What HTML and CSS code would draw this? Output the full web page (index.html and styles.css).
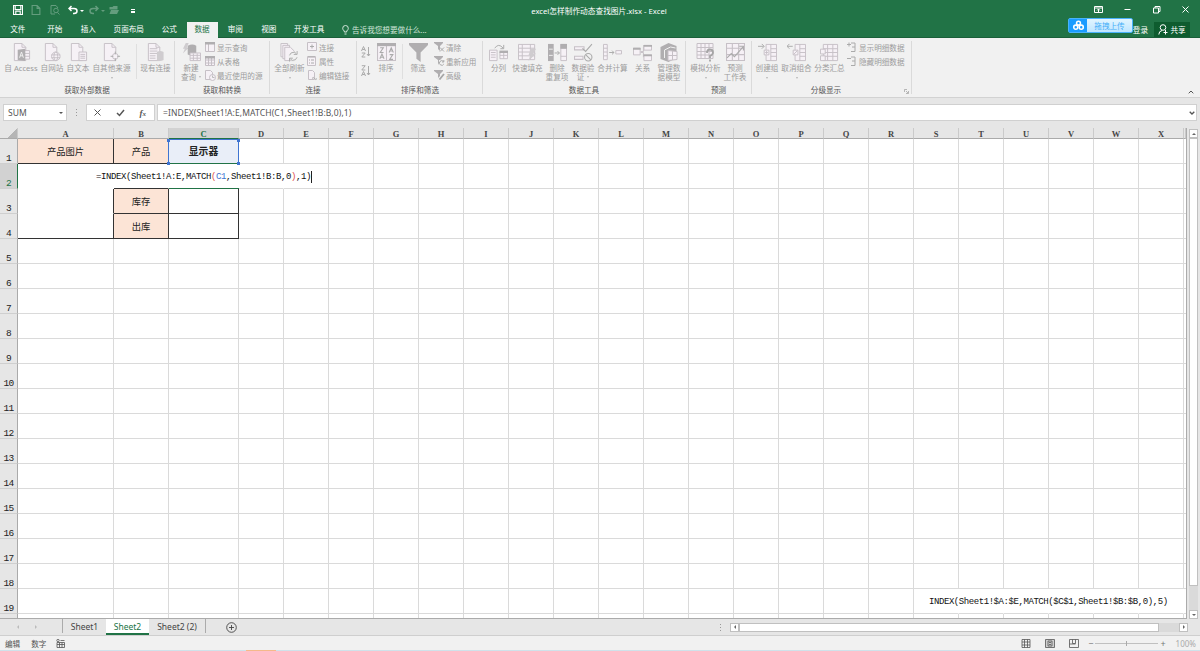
FILE: index.html
```html
<!DOCTYPE html>
<html lang="zh-CN">
<head>
  <meta charset="UTF-8" />
  <meta name="viewport" content="width=device-width, initial-scale=1" />
  <title>excel怎样制作动态查找图片.xlsx - Excel</title>
  <link rel="stylesheet" href="styles.css">
</head>
<body>

  <svg class="defs" width="0" height="0">
    <symbol id="i-access" viewBox="0 0 18 20"><path class="p" d="M1.500 .5h8l4 4v14h-12z"/><path d="M9.500 .5v4h4"/><path class="p" d="M12 8h5.500v9H12M12 11h5.500M12 14h5.500"/><path class="f" d="M5 7l8-1v13l-8-1z"/><path class="w" d="M7 15.500l2-6 2 6M7.700 13.500h2.600"/></symbol>
    <symbol id="i-web" viewBox="0 0 18 20"><path class="p" d="M1.500 .5h8l4 4v14h-12z"/><path d="M9.500 .5v4h4"/><circle class="p" cx="12.500" cy="14" r="4.500"/><ellipse cx="12.500" cy="14" rx="2" ry="4.500"/><path d="M8 12.500h9M8 15.500h9"/></symbol>
    <symbol id="i-text" viewBox="0 0 18 20"><path class="p" d="M1.500 .5h8l4 4v14h-12z"/><path d="M9.500 .5v4h4"/><path class="p" d="M9.500 9.500h8v9h-8zM11 12h5M11 14h5M11 16h5"/></symbol>
    <symbol id="i-other" viewBox="0 0 18 20"><path class="p" d="M1.500 .5h8l4 4v14h-12z"/><path d="M9.500 .5v4h4"/><circle class="p" cx="13" cy="14" r="3"/><path class="d" d="M13 9v3M13 16v3M8 14h3M15 14h3"/></symbol>
    <symbol id="i-exist" viewBox="0 0 18 20"><path class="p" d="M1.500 .5h8l4 4v14h-12z"/><path d="M9.500 .5v4h4M3 6h8M3 8.500h8M3 11h8M3 13.500h6M3 16h6"/><path class="l" d="M10.500 9.500q3.500-2 7 0v8.500q-3.500 2-7 0z"/></symbol>
    <symbol id="i-query" viewBox="0 0 20 20"><path class="l" d="M4 0h3l-2 5h2l-6 6 2-5H1z"/><path class="f" d="M6 3q5-3 9 0v9q-5 2-9 0z"/><path class="p" d="M8.500 10.500h11v8h-11zM8.500 13h11M8.500 16h11M12 11v7.500M16 11v7.500"/></symbol>
    <symbol id="i-refresh" viewBox="0 0 19 20"><path class="p" d="M.5 .5h7v14h-7z"/><path class="p" d="M2.500 2.500h7v14h-7z"/><path class="p" d="M4.500 4.500h6l4 4v10h-10z"/><circle class="bg" cx="13.500" cy="14" r="5"/><path class="d" d="M9.500 13q1-3.500 5-3.300l2 1.300M17.500 8.500v3.500h-3.500M17.500 15q-1 3.500-5 3.300l-2-1.300M9.500 19.500V16H13"/></symbol>
    <symbol id="i-sort" viewBox="0 0 18 18"><path class="p" d="M.5 .5h17v16H.5zM9 2v14.500"/><path class="f" d="M0 0h18v3H0z"/><path class="d" d="M3 4.500h3L3 9h3.200M2.700 15l2-4.500 2 4.500M3.500 13.500h2.500M11.500 9l2-4.500 2 4.500M12.300 7.500h2.500M12 11h3l-3 4.500h3.200"/></symbol>
    <symbol id="i-filter" viewBox="0 0 18 18"><path class="f" d="M0 0h18v2l-7 7v9l-4-3V9L0 2z"/></symbol>
    <symbol id="i-split" viewBox="0 0 20 18"><path class="p" d="M.5 6.500h8v11h-8zM2 9h5M2 11.500h5M2 14h5"/><path class="p" d="M11.500 8.500h8v7h-8zM15.500 8.500v7M11.500 12h8"/><path class="f" d="M11 7h9v2.500h-9z"/><path class="d" d="M6 4.500q4-6 9 0M15.500 1v4H12"/></symbol>
    <symbol id="i-flash" viewBox="0 0 20 18"><path class="p" d="M.5 .5h17v16H.5zM.5 4.500h17M.5 8.500h17M.5 12.500h17M4.500 .5v16M13 .5v16"/><path class="l" d="M14 5h5l-3 5h3l-8 8 2-6h-2z"/></symbol>
    <symbol id="i-dup" viewBox="0 0 20 18"><path class="f" d="M0 0h6v18H0z"/><path class="w" d="M1 5.500h4M1 12h4"/><path class="p" d="M13.500 .5h6v17h-6zM13.500 4.500h6M13.500 13h6"/><path class="f" d="M13 0h7v5h-7z"/><path class="d" d="M7 9.500h5M10 7.500l2 2-2 2"/></symbol>
    <symbol id="i-valid" viewBox="0 0 18 18"><path class="p" d="M.5 3.500h9v3h-9zM.5 12.500h8v3h-8z"/><path class="d" d="M8 5l3 3 6-7"/><circle class="d" cx="13.500" cy="13.500" r="3.500"/><path class="d" d="M11 11l5 5"/></symbol>
    <symbol id="i-merge" viewBox="0 0 20 18"><path class="p" d="M.5 .5h4v16h-4zM.5 4.500h4M.5 8.500h4M.5 12.500h4M13.500 7h6v3.500h-6z"/><path class="d" d="M6.500 9h5M9.500 7l2 2-2 2"/></symbol>
    <symbol id="i-rel" viewBox="0 0 20 18"><path d="M8 8h3V3M8 9h3v5"/><path class="p" d="M.5 4.500h7v7h-7zM11.500 1.500h8v5h-8zM11.500 11.500h8v6h-8z"/><path class="f" d="M0 4h8v2H0zM11 1h9v2h-9zM11 11h9v2h-9z"/></symbol>
    <symbol id="i-model" viewBox="0 0 18 19"><path class="f" d="M0 4l8-4 8 3v12l-8 4-8-3z"/><path class="w" d="M4 15V7l6-3 5 1"/><path class="p" d="M7.500 7.500l9 1v8l-9 1zM12 8v9M7.500 12.500h9"/></symbol>
    <symbol id="i-whatif" viewBox="0 0 18 19"><path class="p" d="M.5 .5h16v15H.5zM.5 4.500h16M.5 8.500h16M.5 12h16M4.500 .5v15M8.500 .5v15M12.500 .5v15"/><path class="q" d="M10.500 10q0-3.500 3-3.500t3 3q0 2-3 3.500v2M13.500 16.500v2"/></symbol>
    <symbol id="i-forecast" viewBox="0 0 18 18"><path class="p" d="M.5 .5h17v16H.5zM.5 5h17M.5 11h17M6 .5v16M12 .5v16"/><path class="d" d="M1 14l4-4 3 3 8-9M12.500 3h4v4"/></symbol>
    <symbol id="i-group" viewBox="0 0 20 18"><path class="p" d="M8.500 .5h11v17h-11zM13.500 .5v17M13.500 5h6M13.500 9h6M13.500 13h6"/><path class="p" d="M6.500 6.500h5v5h-5zM9 7.500v3M7.500 9h3"/><path class="d" d="M0 2.500h6M4 0l2.500 2.500L4 5"/></symbol>
    <symbol id="i-ungroup" viewBox="0 0 20 18"><path class="p" d="M8.500 .5h11v17h-11zM13.500 .5v17M13.500 5h6M13.500 9h6M13.500 13h6"/><path class="p" d="M6.500 6.500h5v5h-5zM7 11l4-4"/><path class="d" d="M0 2.500h6M2.500 0L0 2.500 2.500 5"/></symbol>
    <symbol id="i-subtotal" viewBox="0 0 20 18"><path class="p" d="M3.500 .5h15v17h-15zM8 .5v17M13.500 .5v17M3.500 5h15M3.500 9h15M3.500 13h15"/><path class="p" d="M.5 5.500h5v5h-5zM.5 12.500h5v5h-5z"/></symbol>
    <symbol id="i-s-show" viewBox="0 0 11 11"><path class="p" d="M.5 .5h9v9h-9zM3.500 2v8"/><path class="f" d="M0 0h10v2.500H0z"/></symbol>
    <symbol id="i-s-table" viewBox="0 0 11 11"><path class="p" d="M.5 .5h9v9h-9zM3.500 1v9M6.500 1v9M.5 4h9M.5 7h9"/><path class="f" d="M0 0h10v2.500H0z"/></symbol>
    <symbol id="i-s-recent" viewBox="0 0 11 11"><path class="p" d="M.5 .5h5l2 2v7h-7z"/><circle class="p" cx="7.500" cy="7.500" r="3"/><path d="M7.500 5.500v2h2"/></symbol>
    <symbol id="i-s-conn" viewBox="0 0 11 11"><path class="p" d="M.5 .5h9v8h-9z"/><path class="d" d="M5 2.500v4M3 4.500h4"/></symbol>
    <symbol id="i-s-prop" viewBox="0 0 11 11"><path class="p" d="M.5 .5h8v9h-8z"/><path class="d" d="M2 4h1M4 4h3M2 7h1M4 7h3M1 1h7"/></symbol>
    <symbol id="i-s-link" viewBox="0 0 11 11"><path class="p" d="M1.500 .5h4l2 2v7h-6z"/><path class="d" d="M5 8.500q1-2 2.500 0t2.500 0"/></symbol>
    <symbol id="i-s-clear" viewBox="0 0 11 11"><path class="f" d="M0 0h9v1L6 4v5L4 7V4L0 1z"/><path class="d" d="M6 5.500l4 4M10 5.500l-4 4"/></symbol>
    <symbol id="i-s-reapply" viewBox="0 0 11 11"><path class="f" d="M0 0h9v1L6 4H5v5L4 7V4L0 1z"/><path class="d" d="M9.500 5.500A2.300 2.300 0 1 0 9.800 8M9.800 4v2H8"/></symbol>
    <symbol id="i-s-adv" viewBox="0 0 11 11"><path class="f" d="M0 0h9v1L6 4v2L4 8V4L0 1z"/><path class="q" d="M10 4L5.500 9.500"/></symbol>
    <symbol id="i-s-plus" viewBox="0 0 11 11"><path class="d" d="M0 2.500h4M2 .5v4M4 1h4v8.500H4M5 5h3"/></symbol>
    <symbol id="i-s-minus" viewBox="0 0 11 11"><path class="d" d="M0 2.500h4M4 1h4v8.500H4M5 5h3"/></symbol>
    <symbol id="i-az" viewBox="0 0 10 12"><path class="d" d="M.5 5l2-4.500 2 4.500M1.300 3.500h2.500M.8 7h3.400L.8 11h3.500M7.500 1v9M6 8l1.500 2L9 8"/></symbol>
    <symbol id="i-za" viewBox="0 0 10 12"><path class="d" d="M.8 .7h3.400L.8 5h3.500M.5 11l2-4.500 2 4.500M1.300 9.500h2.500M7.500 1v9M6 8l1.500 2L9 8"/></symbol>
  </svg>

  <header class="titlebar">
    <div class="quick">
      <svg class="q-save" viewBox="0 0 9 9"><path d="M.5 .5h8v8h-8zM2 .5v3.500h5V.5M2.500 8.500v-3h4v3"/></svg>
      <svg class="q-new dim" viewBox="0 0 9 9"><path d="M1 .5h4.500L8 3v5.500H1zM5.500 .5V3H8"/></svg>
      <svg class="q-prev dim" viewBox="0 0 10 10"><path d="M5 9H1V.5h5L8 3"/><circle cx="6" cy="5.500" r="2.300"/><path d="M7.500 7.500L9.500 9.500"/></svg>
      <svg class="q-undo" viewBox="0 0 10 9"><path class="thick" d="M1 3h5q3 0 3 2.500T6 8H5M3.500 .5L1 3l2.500 2.500"/></svg>
      <span class="tri"></span>
      <svg class="q-redo dim" viewBox="0 0 10 9"><path class="thick" d="M9 3H4q-3 0-3 2.500T4 8h1M6.500 .5L9 3 6.500 5.500"/></svg>
      <span class="tri dim"></span>
      <svg class="q-open dim" viewBox="0 0 10 9"><path class="solid" d="M.5 4V1.500h3l1-1h4V4zM.5 8.500l1.500-4h8l-2 4z"/></svg>
      <span class="more"></span>
    </div>
    <div class="doc-title">excel怎样制作动态查找图片.xlsx - Excel</div>
    <div class="win">
      <svg viewBox="0 0 9 9"><path d="M.5 1.500h8v6h-8zM.5 3h8M4.500 7V4M3 5.500l1.500-1.500L6 5.500"/></svg>
      <svg viewBox="0 0 9 9"><path d="M1.500 4.500h6"/></svg>
      <svg viewBox="0 0 9 9"><path d="M1.500 3h5v5h-5zM3 3V1.500h5v5H6.500"/></svg>
      <svg viewBox="0 0 9 9"><path d="M1.500 1.500l6 6M7.500 1.500l-6 6"/></svg>
    </div>
  </header>

  <nav class="tabs">
    <span class="tab">文件</span>
    <span class="tab">开始</span>
    <span class="tab">插入</span>
    <span class="tab wide">页面布局</span>
    <span class="tab">公式</span>
    <span class="tab active">数据</span>
    <span class="tab">审阅</span>
    <span class="tab">视图</span>
    <span class="tab wide">开发工具</span>
    <span class="tell"><svg viewBox="0 0 7 10"><path d="M2.300 7V6Q.7 4.800 .7 3.300a2.800 2.800 0 0 1 5.600 0Q6.300 4.800 4.700 6v1zM2.500 9h2"/></svg>告诉我您想要做什么...</span>
    <span class="login">登录</span>
    <span class="share"><svg viewBox="0 0 10 11"><circle cx="5" cy="3.500" r="2.800"/><path d="M.8 10.500Q1 7 4 6.500M7 6l1 1M5.500 8.500h4M7.500 6.500v4"/></svg>共享</span>
  </nav>
  <div class="upload">
    <span class="upload-logo"><svg viewBox="0 0 14 12"><circle cx="7" cy="3.500" r="2.100"/><circle cx="4" cy="7.800" r="2.200"/><circle cx="10" cy="7.800" r="2.200"/></svg></span>
    <span class="upload-text">拖拽上传</span>
  </div>

  <section class="ribbon">
    <div class="group g-ext">
      <div class="tools">
        <div class="btn b-access"><svg><use href="#i-access"/></svg>自 Access</div>
        <div class="btn b3"><svg><use href="#i-web"/></svg>自网站</div>
        <div class="btn b3"><svg><use href="#i-text"/></svg>自文本</div>
        <div class="btn b5"><svg><use href="#i-other"/></svg>自其他来源<i class="caret"></i></div>
        <div class="vsep"></div>
        <div class="btn b4"><svg><use href="#i-exist"/></svg>现有连接</div>
      </div>
      <div class="caption">获取外部数据</div>
    </div>
    <div class="group g-trans">
      <div class="tools">
        <div class="btn b3"><svg><use href="#i-query"/></svg><span>新建</span><span>查询<i class="caret in"></i></span></div>
        <div class="stack">
          <div><svg><use href="#i-s-show"/></svg>显示查询</div>
          <div><svg><use href="#i-s-table"/></svg>从表格</div>
          <div><svg><use href="#i-s-recent"/></svg>最近使用的源</div>
        </div>
      </div>
      <div class="caption">获取和转换</div>
    </div>
    <div class="group g-conn">
      <div class="tools">
        <div class="btn b4"><svg><use href="#i-refresh"/></svg>全部刷新<i class="caret"></i></div>
        <div class="stack">
          <div><svg><use href="#i-s-conn"/></svg>连接</div>
          <div><svg><use href="#i-s-prop"/></svg>属性</div>
          <div><svg><use href="#i-s-link"/></svg>编辑链接</div>
        </div>
      </div>
      <div class="caption">连接</div>
    </div>
    <div class="group g-sort">
      <div class="tools">
        <div class="az"><svg><use href="#i-az"/></svg><svg><use href="#i-za"/></svg></div>
        <div class="btn b2"><svg><use href="#i-sort"/></svg>排序</div>
        <div class="vsep"></div>
        <div class="btn b2"><svg><use href="#i-filter"/></svg>筛选</div>
        <div class="stack">
          <div><svg><use href="#i-s-clear"/></svg>清除</div>
          <div><svg><use href="#i-s-reapply"/></svg>重新应用</div>
          <div><svg><use href="#i-s-adv"/></svg>高级</div>
        </div>
      </div>
      <div class="caption">排序和筛选</div>
    </div>
    <div class="group g-tools">
      <div class="tools">
        <div class="btn b2"><svg><use href="#i-split"/></svg>分列</div>
        <div class="btn b4"><svg><use href="#i-flash"/></svg>快速填充</div>
        <div class="btn b3"><svg><use href="#i-dup"/></svg><span>删除</span><span>重复项</span></div>
        <div class="btn b3"><svg><use href="#i-valid"/></svg><span>数据验</span><span>证<i class="caret in"></i></span></div>
        <div class="btn b4"><svg><use href="#i-merge"/></svg>合并计算</div>
        <div class="btn b2"><svg><use href="#i-rel"/></svg>关系</div>
        <div class="btn b3"><svg><use href="#i-model"/></svg><span>管理数</span><span>据模型</span></div>
      </div>
      <div class="caption">数据工具</div>
    </div>
    <div class="group g-fore">
      <div class="tools">
        <div class="btn b4"><svg><use href="#i-whatif"/></svg>模拟分析<i class="caret"></i></div>
        <div class="btn b3"><svg><use href="#i-forecast"/></svg><span>预测</span><span>工作表</span></div>
      </div>
      <div class="caption">预测</div>
    </div>
    <div class="group g-outline">
      <div class="tools">
        <div class="btn b3"><svg><use href="#i-group"/></svg>创建组<i class="caret"></i></div>
        <div class="btn b4"><svg><use href="#i-ungroup"/></svg>取消组合<i class="caret"></i></div>
        <div class="btn b4"><svg><use href="#i-subtotal"/></svg>分类汇总</div>
        <div class="stack">
          <div><svg><use href="#i-s-plus"/></svg>显示明细数据</div>
          <div><svg><use href="#i-s-minus"/></svg>隐藏明细数据</div>
        </div>
      </div>
      <div class="caption">分级显示</div>
      <svg class="launcher" viewBox="0 0 5 5"><path d="M.5 3V.5H3M2 2l2 2M4.500 2v2.500H2"/></svg>
    </div>
    <svg class="collapse" viewBox="0 0 6 4"><path d="M.7 3.300L3 1l2.300 2.300"/></svg>
  </section>

  <section class="formula-bar">
    <div class="name-box">SUM<span class="tri"></span></div>
    <div class="grip"></div>
    <div class="fx">
      <svg viewBox="0 0 9 9"><path d="M1.500 1.500l6 6M7.500 1.500l-6 6"/></svg>
      <svg viewBox="0 0 9 9"><path class="thick" d="M1 5l2.500 2.500L8 2"/></svg>
      <em>f<small>x</small></em>
    </div>
    <div class="formula">=INDEX(Sheet1!A:E,MATCH(C1,Sheet1!B:B,0),1)<svg viewBox="0 0 6 4"><path d="M.7 .7L3 3 5.300 .7"/></svg></div>
  </section>

  <main class="sheet">
    <div class="grid">
      <table>
        <colgroup id="cols"></colgroup>
        <thead><tr id="head"></tr></thead>
        <tbody id="rows"></tbody>
      </table>
      <div class="ref-box"><b></b><b></b><b></b><b></b></div>
      <div class="active-edge top"></div>
      <div class="active-edge bottom"></div>
      <div class="editor">=INDEX(Sheet1!A:E,MATCH<span class="red">(</span><span class="blue">C1</span>,Sheet1!B:B,0<span class="red">)</span>,1)</div>
      <div class="overflow-text">INDEX(Sheet1!$A:$E,MATCH($C$1,Sheet1!$B:$B,0),5)</div>
    </div>
    <div class="vscroll">
      <span class="arrow up"></span>
      <span class="thumb"></span>
      <span class="track"></span>
      <span class="arrow down"></span>
    </div>
  </main>

  <footer class="sheet-tabs">
    <span class="nav left"></span><span class="nav right"></span>
    <span class="stab first">Sheet1</span>
    <span class="stab current">Sheet2</span>
    <span class="stab last">Sheet2 (2)</span>
    <svg class="add" viewBox="0 0 11 11"><circle cx="5.500" cy="5.500" r="4.800"/><path d="M5.500 3v5M3 5.500h5"/></svg>
    <div class="grip"></div>
    <div class="hscroll">
      <span class="arrow prev"></span>
      <span class="thumb"></span>
      <span class="arrow next"></span>
    </div>
  </footer>

  <footer class="status">
    <span>编辑</span>
    <span>数字</span>
    <svg class="macro" viewBox="0 0 9 9"><path d="M1 3.500h7.500v5H1zM1 5.500h7.500M3.500 3.500v5M6 3.500v5M4.500 1.500h4"/><circle cx="2" cy="1.500" r="1.200"/></svg>
    <div class="views">
      <svg viewBox="0 0 10 9"><path d="M1 .5h8v8H1zM1 3h8M1 6h8M3.500 .5v8M6.500 .5v8"/></svg>
      <svg viewBox="0 0 10 9"><path class="on" d="M.5 .5h9v8h-9z"/><path d="M3 2h4v5H3zM4 3.500h2M4 5.500h2"/></svg>
      <svg viewBox="0 0 10 9"><path d="M.5 .5h9v8h-9zM3.500 .5v4h3v-4M.5 5h6"/></svg>
    </div>
    <div class="zoom"><span>−</span><i></i><span>+</span></div>
    <span class="percent">100%</span>
  </footer>
  <div class="taskbar"></div>

  <script>
    const cells = {
      A1: ['产品图片', 'peach'], B1: ['产品', 'peach'], C1: ['显示器', 'picked'],
      A2: ['', 'merged'], B2: ['', 'under'], C2: ['', 'open'], D2: ['', 'open'],
      A3: ['', 'merged side'], B3: ['库存', 'peach'], C3: ['', 'boxed'],
      A4: ['', 'boxed'], B4: ['出库', 'peach'], C4: ['', 'boxed']
    };
    // text spilling over S..X hides the inner gridlines of row 19
    'STUVWX'.split('').forEach(c => cells[c + 19] = ['', 'open']);

    const letters = 'ABCDEFGHIJKLMNOPQRSTUVWX'.split('');
    const cols = document.getElementById('cols');
    const head = document.getElementById('head');
    const rows = document.getElementById('rows');

    cols.innerHTML = '<col class="c-num"><col class="c-a"><col class="c-b"><col class="c-c">' +
      '<col class="c-std">'.repeat(21) + '<col class="c-rest">';
    head.innerHTML = '<th class="corner"></th>' +
      letters.map(c => `<th class="${c === 'C' ? 'sel' : ''}">${c}</th>`).join('') + '<th></th>';

    for (let r = 1; r <= 20; r++) {
      const tr = document.createElement('tr');
      tr.innerHTML = `<th class="${r === 2 ? 'sel' : ''}">${r < 20 ? r : ''}</th>` +
        letters.map(c => {
          const [text, cls] = cells[c + r] || ['', ''];
          return `<td class="${cls}">${text}</td>`;
        }).join('') + '<td></td>';
      rows.appendChild(tr);
    }
  </script>
</body>
</html>
```
FILE: styles.css
```css
* {
  box-sizing: border-box;
}

body {
  margin: 0;
  width: 1200px;
  height: 651px;
  overflow: hidden;
  position: relative;
  display: flex;
  flex-direction: column;
  background: #e6e6e6;
  font-family: "Noto Sans", "Noto Sans CJK SC", sans-serif;
  font-size: 7.6px;
  color: #444;
}

svg {
  fill: none;
  stroke: currentColor;
  flex: none;
}

.defs {
  position: absolute;
}

symbol {
  overflow: visible;
}

.p { fill: #f6f1f6; stroke: #c6c0c6; }
.f { fill: #b0aeb0; stroke: none; }
.l { fill: #cfcccf; stroke: none; }
.bg { fill: #f1f1f1; stroke: none; }
.w { stroke: #f1f1f1; }
.d { stroke: #aaa; }
.q { stroke: #a5a5a5; stroke-width: 1.8; }
.solid { fill: currentColor; stroke: none; }

/* title bar */
.titlebar {
  height: 22px;
  flex: none;
  background: #217346;
  color: #fff;
  display: grid;
  grid-template-columns: 400px 398px 402px;
  align-items: center;
}

.quick {
  display: flex;
  align-items: center;
  height: 19px;
  padding-left: 13px;
}

.quick svg {
  width: 10px;
  height: 10px;
  margin-top: -2px;
}

.quick .q-new { margin-left: 8px; }
.quick .q-prev { margin-left: 9px; }
.quick .q-undo { margin-left: 8px; }
.quick .q-redo { margin-left: 5px; }
.quick .q-open { margin-left: 4px; }

.thick {
  stroke-width: 1.5;
}

.dim {
  opacity: .3;
}

.tri {
  border: 2px solid transparent;
  border-top-color: currentColor;
  border-bottom: 0;
  margin-left: 3px;
}

.quick .tri {
  margin-left: 2px;
}

.more {
  width: 4px;
  height: 4px;
  border-top: 1px solid #fff;
  border-bottom: 2px solid #fff;
  margin-left: 12px;
}

.doc-title {
  text-align: center;
  font-size: 7.7px;
  margin-top: -2px;
}

.win {
  display: flex;
  justify-content: flex-end;
  gap: 20px;
  padding-right: 10px;
}

.win svg {
  width: 9px;
  height: 9px;
  margin-top: -3px;
}

/* ribbon tabs */
.tabs {
  height: 16px;
  flex: none;
  background: #217346;
  color: #fff;
  display: flex;
  align-items: center;
  padding-left: 1px;
  border-bottom: 1px solid #1a5f39;
}

.tab {
  width: 33.500px;
  text-align: center;
  line-height: 15px;
}

.tab:first-child { margin-right: 3.500px; }
.tab.wide { width: 47.500px; }

.tab.active {
  width: 31px;
  height: 16px;
  margin: 0 1px -1px .5px;
  background: #f1f1f1;
  color: #217346;
}

.tell {
  display: flex;
  align-items: center;
  margin-left: 9px;
  color: #d3e6da;
}

.tell svg {
  width: 7px;
  height: 10px;
  margin-right: 3px;
}

.login {
  margin-left: auto;
}

.share {
  width: 36px;
  height: 15px;
  margin: 0 10px 0 6px;
  background: #0e5c2f;
  display: flex;
  align-items: center;
  justify-content: center;
  gap: 2px;
}

.share svg {
  width: 10px;
  height: 11px;
}

.upload {
  position: absolute;
  left: 1068px;
  top: 18px;
  width: 65px;
  height: 15px;
  display: flex;
  border: 1px solid #49b2fb;
  border-radius: 2px;
  background: linear-gradient(#e2f5ff, #bfe6ff);
}

.upload-logo {
  width: 18px;
  background: #1a9cff;
  color: #fff;
  display: flex;
  align-items: center;
  justify-content: center;
}

.upload-logo svg {
  width: 13px;
  height: 11px;
  stroke-width: 1.7;
}

.upload-text {
  flex: 1;
  text-align: center;
  line-height: 14px;
  color: #45aef8;
}

/* ribbon */
.ribbon {
  height: 60px;
  flex: none;
  display: flex;
  position: relative;
  background: #f1f1f1;
  border-bottom: 1px solid #d2d2d2;
  color: #9c9c9c;
}

.group {
  position: relative;
  display: flex;
  flex-direction: column;
  padding-top: 5px;
}

.group::after {
  content: "";
  position: absolute;
  right: 0;
  top: 3px;
  bottom: 3px;
  width: 1px;
  background: #dadada;
}

.g-ext { width: 175px; padding-left: 3px; }
.g-trans { width: 95px; padding-left: 3px; }
.g-conn { width: 87px; padding-left: 3px; }
.g-sort { width: 126px; padding-left: 4px; }
.g-tools { width: 203px; padding-left: 3px; }
.g-fore { width: 66px; padding-left: 3px; }
.g-outline { width: 160px; padding-left: 2px; }

.tools {
  height: 42px;
  display: flex;
}

.btn {
  display: flex;
  flex-direction: column;
  align-items: center;
  line-height: 9px;
  white-space: nowrap;
  flex: none;
}

.btn svg {
  width: 19px;
  height: 19px;
  margin-bottom: 2px;
  stroke: #c6c0c6;
}

.b-access { width: 36px; }
.b2 { width: 25px; }
.b3 { width: 26px; }
.b4 { width: 33px; }
.b5 { width: 41px; }

.g-ext .b4 { margin-left: 2px; }
.g-sort .b2 { width: 30px; }
.g-tools .b2:nth-child(6) { width: 27px; }

.caret {
  border: 1.500px solid transparent;
  border-top: 2px solid #b5b5b5;
  border-bottom: 0;
  margin-top: 4px;
}

.caret.in {
  display: inline-block;
  margin: 0 0 2px 3px;
}

.vsep {
  width: 1px;
  height: 35px;
  margin: 1px 0 0 4px;
  background: #dfdfdf;
}

.g-sort .vsep {
  margin-left: 1px;
}

.stack {
  margin: -3px 0 0 1px;
}

.stack div {
  display: flex;
  align-items: center;
  height: 14.300px;
  white-space: nowrap;
}

.stack svg {
  width: 11px;
  height: 11px;
  margin-right: 1px;
  stroke: #bbb;
}

.az svg {
  display: block;
  width: 10px;
  height: 12px;
  margin: 3px 0 7px;
}

.caption {
  text-align: center;
  line-height: 10px;
  padding-right: 4px;
  color: #555;
}

.g-outline .caption {
  padding-right: 14px;
}

.launcher {
  position: absolute;
  right: 3px;
  bottom: 3px;
  width: 5px;
  height: 5px;
  stroke-width: .7;
}

.collapse {
  position: absolute;
  right: 6px;
  bottom: 3px;
  width: 6px;
  height: 4px;
  color: #555;
}

/* formula bar */
.formula-bar {
  height: 30px;
  flex: none;
  display: flex;
  padding: 6px 3px 7px;
  color: #555;
  font-size: 8.500px;
}

.name-box, .fx, .formula {
  display: flex;
  align-items: center;
  background: #fff;
  border: 1px solid #d0d0d0;
}

.name-box {
  width: 64px;
  justify-content: space-between;
  padding: 0 3px 0 4px;
}

.grip {
  width: 1px;
  height: 7px;
  background: repeating-linear-gradient(#999 0 1px, transparent 1px 3px);
}

.formula-bar .grip {
  margin: 5px 9px 0 9px;
}

.fx {
  width: 69px;
  justify-content: space-between;
  padding: 0 8px 0 6px;
}

.fx svg {
  width: 9px;
  height: 9px;
}

.fx em {
  font: italic bold 9px "Liberation Serif", serif;
}

.fx small {
  font-size: 7px;
}

.formula {
  flex: 1;
  margin-left: 2px;
  padding: 0 1px 0 5px;
  justify-content: space-between;
  letter-spacing: .12px;
}

.formula svg {
  width: 6px;
  height: 4px;
  stroke-width: 1.3;
}

/* sheet */
.sheet {
  height: 491px;
  flex: none;
  display: flex;
}

.grid {
  position: relative;
  width: 1187px;
  height: 491px;
  overflow: hidden;
  background: #fff;
  border-right: 1px solid #ababab;
  border-bottom: 1px solid #ababab;
}

table {
  width: 1186px;
  table-layout: fixed;
  border-collapse: separate;
  border-spacing: 0;
}

.c-num { width: 18px; }
.c-a { width: 96px; }
.c-b { width: 55px; }
.c-c { width: 70px; }
.c-std { width: 45px; }
.c-rest { width: 2px; }

th, td {
  padding: 0;
  height: 25px;
  overflow: hidden;
  border-right: 1px solid #dadada;
  border-bottom: 1px solid #dadada;
}

th {
  background: #e6e6e6;
  color: #222;
  font: 9.500px/8px "Liberation Mono", monospace;
  letter-spacing: -.7px;
  vertical-align: bottom;
  border-right-color: #aaa;
  border-bottom-color: #cfcfcf;
}

thead th {
  height: 11px;
  padding-top: 2px;
  font: bold 8.500px/8px "Liberation Serif", serif;
  letter-spacing: 0;
  color: #444;
  border-right-color: #cacaca;
  border-bottom-color: #aaa;
}

tbody th {
  padding-top: 16px;
}

th.sel {
  background: #d2d2d2;
  color: #217346;
}

thead th.sel {
  border-bottom-color: #217346;
}

tbody th.sel {
  border-right-color: #217346;
}

.corner {
  background: linear-gradient(135deg, #e6e6e6 65%, #b5b5b5 65%);
}

td {
  text-align: center;
  font-size: 9.300px;
  line-height: 12px;
  padding-top: 1px;
  color: #222;
}

td:last-child {
  border-right: 0;
}

.peach, .boxed {
  border-color: #333;
}

.peach {
  background: #fce4d6;
}

.picked {
  background: #e9eef8;
  font-weight: bold;
  font-size: 9.800px;
}

.merged {
  border-color: #fff;
}

.side {
  border-right-color: #333;
}

.under {
  border-right-color: #fff;
  border-bottom-color: #333;
}

.open {
  border-right-color: #fff;
}

.ref-box {
  position: absolute;
  left: 168px;
  top: 11px;
  width: 71px;
  height: 25px;
  border: 1px solid #3f74d1;
}

.ref-box b {
  position: absolute;
  width: 3px;
  height: 3px;
  background: #3f74d1;
}

.ref-box b:nth-child(1) { left: -2px; top: -1px; }
.ref-box b:nth-child(2) { right: -2px; top: -1px; }
.ref-box b:nth-child(3) { left: -2px; bottom: -2px; }
.ref-box b:nth-child(4) { right: -2px; bottom: -2px; }

.active-edge {
  position: absolute;
  left: 170px;
  width: 67px;
  height: 1px;
  background: #217346;
}

.active-edge.top { top: 35px; }
.active-edge.bottom { top: 60px; width: 70px; left: 169px; }

.editor, .overflow-text {
  position: absolute;
  font: 9px/12px "Liberation Mono", monospace;
  letter-spacing: -.4px;
  color: #111;
  white-space: nowrap;
}

.editor {
  left: 96px;
  top: 43px;
  border-right: 1px solid #222;
}

.overflow-text {
  left: 929px;
  top: 468px;
  letter-spacing: -.43px;
}

.red { color: #e0524d; }
.blue { color: #3f74d1; }

.vscroll {
  width: 13px;
  height: 491px;
  padding: 1px 2px 0 2px;
  display: flex;
  flex-direction: column;
}

.arrow {
  display: flex;
  align-items: center;
  justify-content: center;
  width: 9px;
  height: 9px;
  background: #fff;
  border: 1px solid #c0c0c0;
}

.arrow::after {
  content: "";
  border: 2px solid transparent;
}

.arrow.up::after { border-bottom-color: #666; border-top: 0; }
.arrow.down::after { border-top-color: #666; border-bottom: 0; }
.arrow.prev::after { border-right-color: #666; border-left: 0; }
.arrow.next::after { border-left-color: #666; border-right: 0; }

.thumb {
  background: #fff;
  border: 1px solid #c0c0c0;
}

.vscroll .thumb {
  height: 448px;
}

.track {
  height: 24px;
  background: #dadada;
}

/* sheet tabs */
.sheet-tabs {
  height: 17px;
  flex: none;
  display: flex;
  align-items: center;
  border-bottom: 1px solid #cfcfcf;
  font-size: 8.500px;
}

.nav {
  border: 2px solid transparent;
}

.nav.left { border-right-color: #bbb; border-left: 0; margin-left: 17px; }
.nav.right { border-left-color: #bbb; border-right: 0; margin-left: 16px; }

.stab {
  height: 14px;
  line-height: 15px;
  text-align: center;
  margin-bottom: 2px;
}

.first {
  width: 44px;
  margin-left: 25px;
  border-left: 1px solid #ababab;
}

.current {
  width: 43px;
  height: 16px;
  margin-bottom: 0;
  background: #fff;
  color: #217346;
  border-bottom: 2px solid #217346;
}

.last {
  width: 57px;
  border-right: 1px solid #ababab;
}

.add {
  width: 11px;
  height: 11px;
  margin-left: 20px;
  stroke-width: .9;
}

.sheet-tabs .grip {
  margin-left: auto;
}

.hscroll {
  display: flex;
  width: 458px;
  margin: 0 12px 0 9px;
  background: #dadada;
}

.hscroll .thumb {
  width: 420px;
  margin-right: auto;
}

/* status bar */
.status {
  height: 14px;
  flex: none;
  display: flex;
  align-items: center;
  padding: 0 4px 0 5px;
  background: #f1f1f1;
  color: #555;
}

.status span + span {
  margin-left: 11px;
}

.macro {
  width: 9px;
  height: 9px;
  margin-left: 10px;
  stroke-width: .8;
}

.views {
  display: flex;
  gap: 14px;
  margin-left: auto;
}

.views svg {
  width: 10px;
  height: 9px;
  stroke-width: .8;
}

.on {
  fill: #cfcfcf;
}

.zoom {
  display: flex;
  align-items: center;
  margin-left: 9px;
  color: #777;
  font-size: 9px;
}

.zoom i {
  width: 63px;
  height: 5px;
  margin: 0 2px;
  background:
    linear-gradient(#aaa, #aaa) center / 1px 5px no-repeat,
    linear-gradient(#c0c0c0, #c0c0c0) center / 100% 1px no-repeat;
}

.zoom span + span {
  margin-left: 0;
}

.percent {
  margin-left: 10px;
  color: #aaa;
  font-size: 8px;
}

.taskbar {
  height: 1px;
  flex: none;
  background: linear-gradient(90deg, #cfe2ea 0 246px, #f5b98a 246px 276px, #cfe2ea 276px);
}
```
